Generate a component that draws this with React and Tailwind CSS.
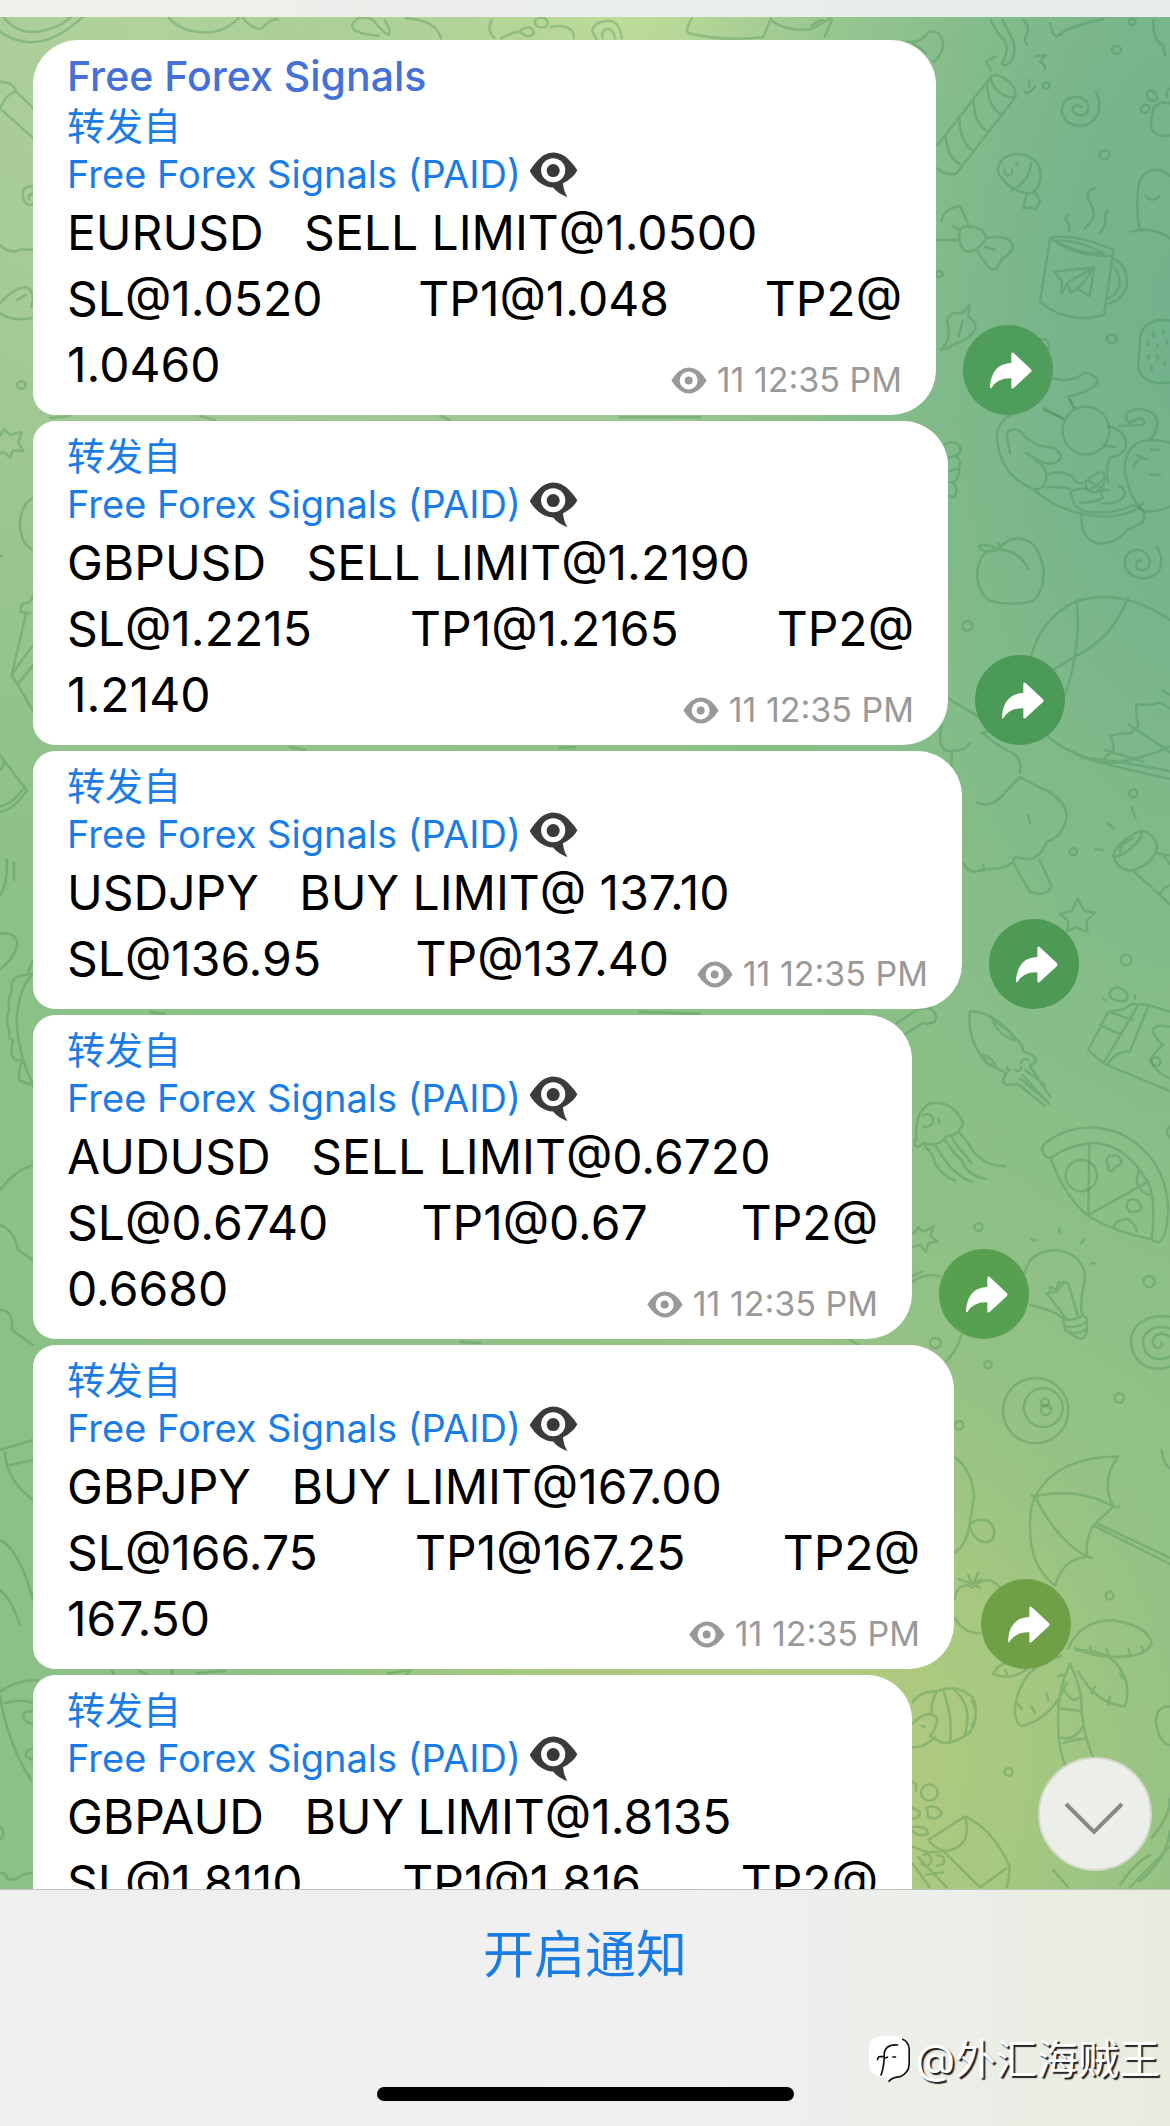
import React from "react";

const messages = [
  {
    id: 1,
    title: "Free Forex Signals",
    width: "w-[903px]",
    corners: "rounded-tl-[45px] rounded-bl-[22px]",
    share: "bg-[#4f9d5a]",
    lines: [["EURUSD   SELL LIMIT@1.0500"], ["SL@1.0520", "TP1@1.048", "TP2@"]],
    last: "1.0460",
  },
  {
    id: 2,
    width: "w-[915px]",
    corners: "rounded-l-[22px]",
    share: "bg-[#4b9a57]",
    lines: [["GBPUSD   SELL LIMIT@1.2190"], ["SL@1.2215", "TP1@1.2165", "TP2@"]],
    last: "1.2140",
  },
  {
    id: 3,
    width: "w-[929px]",
    corners: "rounded-l-[22px]",
    share: "bg-[#4c9a54]",
    lines: [["USDJPY   BUY LIMIT@ 137.10"]],
    last: "SL@136.95       TP@137.40",
  },
  {
    id: 4,
    width: "w-[879px]",
    corners: "rounded-l-[22px]",
    share: "bg-[#57a050]",
    lines: [["AUDUSD   SELL LIMIT@0.6720"], ["SL@0.6740", "TP1@0.67", "TP2@"]],
    last: "0.6680",
  },
  {
    id: 5,
    width: "w-[921px]",
    corners: "rounded-l-[22px]",
    share: "bg-[#6fa045]",
    lines: [["GBPJPY   BUY LIMIT@167.00"], ["SL@166.75", "TP1@167.25", "TP2@"]],
    last: "167.50",
  },
  {
    id: 6,
    width: "w-[879px]",
    corners: "rounded-l-[22px]",
    lines: [["GBPAUD   BUY LIMIT@1.8135"], ["SL@1.8110", "TP1@1.816", "TP2@"]],
  },
];

const SpeechEye = () => (
  <svg viewBox="86 58 150 147" className="h-[48px] w-[49px] shrink-0" aria-hidden="true">
    <path
      fill="#3b3b3d"
      d="M88 122Q98 104 116 86Q136 66 160 66Q186 66 208 88Q224 104 234 120Q222 144 190 160Q192 184 204 203Q172 190 160 173Q116 170 88 122Z"
    />
    <circle cx="160" cy="120" r="37" fill="#fff" />
    <circle cx="160" cy="121" r="20" fill="#39393b" />
  </svg>
);

const ViewsEye = () => (
  <svg viewBox="37 79 108 80" className="h-[27px] w-9" aria-hidden="true">
    <path fill="#999" d="M38 119Q62 80 91 80Q120 80 144 119Q120 158 91 158Q62 158 38 119Z" />
    <circle cx="90" cy="119" r="27" fill="#fff" />
    <circle cx="90" cy="119" r="12" fill="#999" />
  </svg>
);

const ShareArrow = () => (
  <svg viewBox="25 14 268 270" className="size-full" aria-hidden="true">
    <path
      fill="#fff"
      d="M169 100Q170 94 176 98L228 147Q231 151 228 155L176 203Q170 207 169 201V174Q128 172 109 203Q104 207 105 198Q110 130 169 128Z"
    />
  </svg>
);

const Wallpaper = () => (
  <svg
    viewBox="0 17 1170 1872"
    preserveAspectRatio="xMaxYMin slice"
    className="absolute inset-0 size-full"
    aria-hidden="true"
  >
    <defs>
      <radialGradient id="top" gradientUnits="userSpaceOnUse" cx="620" cy="0" r="520">
        <stop offset="0" stopColor="#bfdc99" />
        <stop offset="0.5" stopColor="#b0d399" stopOpacity="0.6" />
        <stop offset="1" stopColor="#a8cf98" stopOpacity="0" />
      </radialGradient>
      <radialGradient id="corner" gradientUnits="userSpaceOnUse" cx="150" cy="40" r="900">
        <stop offset="0" stopColor="#b2d29b" />
        <stop offset="0.4" stopColor="#a8cb98" stopOpacity="0.8" />
        <stop offset="1" stopColor="#a0c898" stopOpacity="0" />
      </radialGradient>
      <radialGradient
        id="teal"
        gradientUnits="userSpaceOnUse"
        cx="0"
        cy="0"
        r="1"
        gradientTransform="translate(1210 330) scale(560 1080)"
      >
        <stop offset="0" stopColor="#70b18c" />
        <stop offset="0.3" stopColor="#79b58b" />
        <stop offset="0.6" stopColor="#7fb98a" stopOpacity="0.6" />
        <stop offset="1" stopColor="#86bc88" stopOpacity="0" />
      </radialGradient>
      <radialGradient id="lime" gradientUnits="userSpaceOnUse" cx="760" cy="1760" r="760">
        <stop offset="0" stopColor="#bccc80" />
        <stop offset="0.35" stopColor="#a9c97f" stopOpacity="0.9" />
        <stop offset="0.6" stopColor="#98c384" stopOpacity="0.6" />
        <stop offset="1" stopColor="#90c086" stopOpacity="0" />
      </radialGradient>
    </defs>
    <rect y="17" width="1170" height="1872" fill="#8bc086" />
    <rect y="17" width="1170" height="1872" fill="url(#corner)" />
    <rect y="17" width="1170" height="1872" fill="url(#top)" />
    <rect y="17" width="1170" height="1872" fill="url(#teal)" />
    <rect y="17" width="1170" height="1872" fill="url(#lime)" />

    <g
      fill="none"
      stroke="#3d8650"
      strokeOpacity="0.3"
      strokeWidth="2.5"
      strokeLinecap="round"
      strokeLinejoin="round"
      className="[&_*]:[vector-effect:non-scaling-stroke]"
    >
      {/* top left */}
      <g transform="scale(.3827 .3333)">
        <path d="M0 95Q100 175 215 52M10 52Q60 130 165 70L185 52M440 52Q480 105 560 95Q600 85 625 52M635 55Q660 90 685 85Q700 60 725 58" />
        <path d="M990 108Q910 100 922 70Q940 40 975 60Q1000 95 1015 105Q1025 95 1005 60M1060 55Q1140 60 1152 115M1285 60Q1270 90 1292 115M1310 115Q1340 95 1360 95Q1380 120 1395 100Q1390 70 1360 90M1400 75Q1390 55 1420 52Q1440 65 1425 82Q1405 85 1400 75M1440 80Q1500 70 1500 115" />
        <path d="M0 245Q35 245 42 275L88 325M0 325L88 415M0 325Q20 275 42 275M88 560Q50 555 62 600Q70 620 88 612M88 580Q72 582 76 598M0 735Q25 765 55 748L88 750M0 910Q40 860 70 862Q95 880 82 920M0 940Q30 965 82 955M45 900L66 885" />
        <circle cx="56" cy="1155" r="11" />
      </g>
      {/* top right */}
      <g transform="translate(570 0) scale(.3827 .3333)">
        <path d="M70 118L58 95Q60 65 100 62Q130 62 135 115M85 115Q80 88 100 86Q115 90 118 115M318 55Q300 90 310 100Q400 125 505 112L525 55M525 60Q560 95 630 88L680 55M630 80Q650 60 660 60M665 110L685 60M880 125Q915 130 935 98Q965 85 975 125Q975 165 950 185M895 130Q920 145 930 160" />
        <path d="M1100 60Q1115 100 1135 120Q1150 150 1128 190Q1140 205 1155 180Q1170 140 1150 105L1130 60M1185 60Q1205 85 1190 110Q1185 125 1195 135M1220 168L1243 165L1228 185Q1245 195 1240 210M1088 185L1100 210M1095 180L1112 170M1188 275Q1200 285 1215 260M1200 240V260M1255 70L1258 90Q1265 110 1275 108Q1310 75 1395 58M1525 60Q1520 120 1550 135L1555 165" />
        <path d="M1100 230L960 435M1165 290L1010 520Q985 530 960 505M1100 230Q1115 218 1145 242Q1170 270 1163 290Q1150 300 1120 275Q1098 250 1100 230M1090 250Q1090 320 1128 345M1055 305Q1055 370 1092 395M1018 360Q1018 425 1055 455M982 410Q985 470 1018 492" />
        <path d="M1375 275Q1400 345 1350 375Q1295 385 1285 335Q1285 290 1330 290Q1365 305 1350 340Q1325 355 1312 330Q1318 308 1335 320" />
        <path d="M1120 500Q1130 460 1175 462Q1225 470 1230 520Q1230 570 1200 582Q1150 570 1125 530Q1115 515 1120 500M1135 510Q1135 530 1150 525M1155 570Q1200 545 1205 490M1165 495L1170 490M1192 585L1185 625L1205 622L1218 630L1228 605L1215 575M1155 510V520" />
        <path d="M970 665Q975 625 1020 618L1045 685M960 720L1015 720M1020 685Q1045 670 1075 690Q1090 705 1085 720Q1060 760 1035 755Q1010 735 1020 685M1085 715Q1150 700 1158 740Q1150 765 1130 775L1115 805Q1100 815 1090 795L1065 755M1000 680L1020 690M1085 740L1110 750" />
        <path d="M1255 712L1228 905Q1300 975 1395 945L1420 755M1255 712Q1320 700 1420 750M1255 712Q1310 770 1415 768M1270 722Q1330 720 1395 760Q1330 765 1270 722M1420 775Q1460 800 1455 860Q1440 905 1400 912M1418 800Q1440 820 1435 860Q1425 890 1405 895M1265 815L1370 802L1358 888L1325 865L1340 850L1370 802L1300 848L1285 880V842ZM1300 848L1308 880L1325 865" />
        <path d="M1370 565Q1345 575 1355 600Q1375 635 1365 660L1345 685M1300 645Q1290 660 1305 675V693M1405 630Q1395 650 1400 670L1385 700" />
        <path d="M970 1050Q1000 1010 985 970Q990 930 1025 940L1045 915L1040 950Q1065 965 1058 990Q1040 1020 1010 1030Q990 1045 970 1050M1025 965L1015 1010M1225 1020Q1255 1010 1250 1045" />
        <path d="M1465 695L1488 690Q1475 600 1490 540Q1505 505 1540 510Q1565 520 1580 540M1488 690Q1530 685 1568 715M1505 588Q1520 610 1540 590" />
        <path d="M1490 1010Q1500 960 1550 960L1600 965M1490 1010L1485 1100Q1490 1145 1540 1150L1600 1145M1525 1000V1010M1550 990V1000M1510 1025V1035M1535 1035V1045M1512 1065V1075M1535 1065V1078M1520 1100V1110M1555 1085V1095M1560 1020V1032" />
        <path d="M1525 325Q1540 300 1570 310M1525 325Q1515 360 1520 390Q1540 415 1570 405M1507 285Q1510 265 1525 275Q1540 290 1530 302Q1510 305 1507 285M1492 325Q1500 305 1515 320Q1515 340 1500 338Q1490 335 1492 325M1560 290Q1555 265 1575 265" />
        <circle cx="1428" cy="150" r="12" />
        <circle cx="1397" cy="464" r="13" />
        <circle cx="1416" cy="1017" r="13" />
        <circle cx="1469" cy="66" r="9" />
        <circle cx="1244" cy="257" r="9" />
        <circle cx="965" cy="822" r="9" />
        <path d="M1265 1135Q1310 1150 1345 1118Q1380 1125 1378 1150Q1360 1175 1300 1190L1318 1222M1240 1225L1290 1258" />
      </g>
      {/* astronaut, peach, globe, tree, torch */}
      <g transform="translate(780 400) scale(.3333 .3827)">
        <path d="M650 95Q655 55 690 40M650 95Q660 200 760 232Q840 300 980 305Q1060 300 1090 270M690 140L680 90Q690 70 720 80Q750 120 820 125Q850 140 840 155Q820 175 780 160L738 138M760 232Q790 240 800 205Q800 170 765 158M800 195Q840 180 875 200Q890 220 905 218M800 228Q850 225 875 235M870 250Q870 230 920 232M875 250Q880 285 920 292Q1000 300 1060 275M905 295Q900 370 960 375Q1010 375 1040 340L1090 320M1060 275L1090 290Q1100 310 1080 325" />
        <path d="M870 0L882 22M790 25L850 48" />
        <ellipse cx="918" cy="80" rx="70" ry="63" />
        <path d="M985 68L1000 72Q1040 85 1038 120Q1030 145 990 150Q975 180 985 215M1020 68L1090 65Q1100 50 1080 48L1050 60Q1035 55 1040 35Q1065 15 1110 30Q1140 45 1130 70Q1125 95 1105 105M975 120L1005 122M1035 190Q1030 125 1085 108Q1130 100 1170 112M1035 190Q1050 260 1090 290Q1130 295 1170 278M1060 175Q1070 155 1090 150M1070 145L1100 155M1115 130H1138M1112 195H1140M915 215Q950 185 970 190Q985 220 950 240Q920 245 915 215M925 210L970 235M930 235L975 205M900 268Q940 270 970 255Q950 230 985 235M965 270Q1020 275 1035 245Q1030 225 1015 225" />
        <path d="M660 392Q600 385 592 450Q590 500 630 525Q690 540 760 525Q800 490 788 430Q770 360 710 362Q680 365 660 385M660 392Q710 390 745 440M660 390Q620 375 595 382Q610 405 660 390M655 375L662 392" />
        <path d="M1130 383Q1155 415 1135 450Q1100 475 1060 460Q1025 440 1038 410Q1055 385 1090 395Q1115 410 1108 435Q1085 455 1068 435Q1070 415 1085 420" />
        <path d="M755 665Q785 570 890 525Q1030 490 1170 575M805 880Q870 930 990 950Q1100 935 1170 905M905 935Q1000 940 1170 970M930 940Q1060 970 1170 990M890 525Q905 650 855 770M1045 515Q1000 620 890 668Q850 690 820 705M1150 760L1170 770M1170 805L1140 790Q1110 800 1070 795Q1065 820 1075 850Q1050 880 1030 870L990 878Q1005 900 1000 915L975 935M1045 848L1170 920M975 915L1090 945" />
        <path d="M505 780L600 830M485 850Q470 910 505 918L540 915Q560 910 570 895M515 920V955M610 870Q630 890 680 915Q730 930 720 975M720 985Q680 1020 660 1040Q630 1065 590 1052M720 985Q770 1010 800 1020Q860 1050 860 1090Q850 1140 800 1155Q780 1200 740 1200L705 1195Q690 1230 610 1225Q570 1245 550 1210M700 1210L750 1285Q800 1300 815 1270L778 1200M745 1085L750 1105M610 1215L612 1230M605 870L625 865" />
        <path d="M1000 1190Q1005 1160 1080 1125L1100 1128Q1130 1145 1132 1170Q1120 1215 1050 1230Q1010 1225 1000 1190M1000 1190Q1020 1200 1060 1165Q1095 1140 1080 1125M1022 1190Q1010 1165 1060 1145M1060 1230L1170 1318M1132 1185L1170 1190M1140 1290Q1155 1270 1170 1268M1150 1190L1170 1212M982 1105L1003 1120M1055 1063L1067 1093M948 1174L970 1176" />
        <path d="M893 1302L912 1335L945 1340L920 1362L922 1390L890 1378L862 1388L865 1362L840 1343L875 1335Z" />
        <path d="M495 115Q520 105 540 120Q545 140 530 145Q545 165 538 180Q535 210 520 215Q540 240 520 255L508 250M508 150L530 145M508 185L535 180M508 215L520 215" />
        <ellipse cx="562" cy="590" rx="15" ry="12" />
        <ellipse cx="1060" cy="1028" rx="12" ry="10" />
        <ellipse cx="880" cy="1180" rx="11" ry="9" />
        <ellipse cx="1039" cy="1463" rx="16" ry="14" />
      </g>
      {/* squid, gift, jellyfish, pizza, bulb, spiral, ball */}
      <g transform="translate(780 980) scale(.3333)">
        <path d="M350 130L395 100Q420 80 450 85Q475 100 465 125Q445 135 430 128L375 162" />
        <path d="M570 95Q560 180 620 250L680 280Q660 305 680 315L715 312L795 378M570 95Q640 90 725 195L730 215Q770 225 768 245L750 258L810 350M638 122Q650 160 705 182Q690 150 638 122M610 225Q615 250 648 262Q640 235 610 225M735 270L795 315M728 285L808 372M720 295L790 355M682 262Q680 275 690 270M705 268Q715 280 725 262M745 240Q730 232 722 250" />
        <path d="M985 95L1030 88L1055 72L1105 75L1170 95M985 95L925 210L970 250L1170 333M970 250Q1030 150 1075 75M985 250Q1010 210 1050 215Q1075 150 1105 80M960 135L1025 165M985 95L1060 120M990 50Q985 25 1015 22Q1050 35 1040 60Q1015 70 990 50M1065 45V55M970 55L975 60M1170 140Q1120 130 1118 155Q1130 180 1150 195Q1120 220 1110 240Q1130 280 1170 295" />
        <circle cx="1128" cy="245" r="13" />
        <path d="M410 480Q400 400 450 370Q520 360 550 430Q540 455 520 465Q500 465 490 480Q470 500 430 490M430 490Q400 515 405 480M430 405Q455 395 460 420Q455 445 430 440M475 415L478 430M435 500Q460 520 465 550Q490 590 525 602M465 495Q480 520 495 540Q530 590 575 605M495 480Q520 520 545 540Q560 585 615 597M515 470Q530 500 560 530Q570 545 575 550M535 455Q560 480 580 515Q620 560 675 558" />
        <path d="M790 520Q780 500 800 485Q900 415 1020 460Q1160 530 1165 690Q1160 770 1140 785Q1120 790 1115 775Q1130 650 1100 600Q1040 500 950 488Q860 495 820 530Q800 540 790 520M812 535Q850 640 920 705Q1000 755 1115 778M928 490L925 705L1105 605M1080 570Q1060 600 1080 625Q1095 645 1115 645M1000 740Q1015 715 1045 718Q1070 735 1070 755" />
        <circle cx="904" cy="587" r="47" />
        <path d="M980 545Q980 525 1000 528Q1015 520 1025 545Q1020 560 1005 560Q1000 580 985 570L985 555ZM1040 680Q1040 660 1060 658Q1080 660 1085 685Q1075 700 1060 695Q1045 700 1040 680M1170 440Q1150 455 1170 472" />
        <path d="M735 880Q745 815 825 810Q915 820 915 900Q900 960 905 1000L920 1015L922 1050Q915 1080 895 1075L855 1050L850 1015Q820 990 750 975M855 1020Q890 1020 910 1005M858 1040Q895 1045 920 1025M868 1055Q900 1065 920 1045M858 1015L800 940L830 935L850 905L865 910L893 1005M810 940V920L830 930L835 905L850 915M838 745V757M755 778L765 783M912 778L903 790M935 850H945" />
        <path d="M1170 1010Q1080 1000 1055 1065Q1045 1130 1100 1160Q1140 1172 1170 1160M1170 1045Q1110 1030 1090 1075Q1085 1120 1120 1135Q1150 1140 1170 1130M1170 1070Q1140 1050 1120 1075Q1115 1100 1135 1105Q1150 1100 1145 1088" />
        <circle cx="767" cy="1292" r="98" />
        <circle cx="790" cy="1283" r="58" />
        <circle cx="795" cy="1268" r="12" />
        <circle cx="798" cy="1290" r="15" />
        <circle cx="595" cy="742" r="12" />
        <circle cx="1107" cy="905" r="17" />
        <circle cx="466" cy="1089" r="16" />
        <circle cx="624" cy="1154" r="11" />
        <circle cx="1018" cy="1254" r="14" />
        <circle cx="537" cy="1336" r="13" />
        <path d="M400 760L415 742L430 755L460 740L452 768L472 785L445 790L438 815L420 795L400 800M398 905Q440 875 480 890M398 888L425 875M545 1065Q530 1115 497 1145" />
      </g>
      {/* umbrella, palm, pumpkin, popcorn */}
      <g transform="translate(780 1450) scale(.3333 .431)">
        <path d="M523 15Q580 50 582 110L568 175Q560 220 525 238M568 175Q590 155 625 165Q655 185 635 210Q590 225 568 175" />
        <path d="M765 108Q830 15 1015 15Q960 70 1000 132L940 175Q915 210 922 248Q850 250 825 315Q750 270 750 180Q750 130 765 108M765 108Q900 85 1000 132M765 108Q830 210 922 248M1000 132H1018M940 175L1170 265M955 172L1170 250M922 248L935 250M755 105L770 112M1145 0Q1150 35 1170 42" />
        <path d="M865 460Q900 395 1000 395Q1110 410 1115 450Q1100 470 1070 475Q970 490 885 460M935 470L930 455M985 478L980 460M1050 475L1045 460M1090 470L1085 455M890 465Q1010 460 1040 540Q1045 580 1035 595Q950 590 895 515M935 565L945 550M985 590L990 572M1020 520L1030 530M845 478Q720 500 705 600Q705 640 730 640Q820 620 860 540M765 610L755 595M805 580L800 565M715 590L725 600M870 495Q830 560 835 640Q835 690 855 730M870 495Q910 560 905 610Q915 670 940 715M855 560Q880 590 895 575M845 600L900 605M838 665Q880 680 910 640M850 680Q890 670 922 670M860 520L835 525M640 520Q655 495 680 495M640 520Q700 535 740 508M680 520L675 510" />
        <path d="M575 320Q630 280 670 330M525 345Q530 310 570 315M525 390Q550 425 600 425M535 300L575 310L605 300M575 310L565 290M580 310L595 285M575 310L600 320" />
        <path d="M398 585Q420 560 470 560Q530 540 580 575Q600 620 570 655Q530 680 490 680L450 665M398 690Q440 690 465 665M398 635Q440 600 470 620Q475 640 450 665M470 560Q450 590 455 615M490 558Q520 620 510 680M520 555Q580 590 555 660M575 580Q600 610 575 640M425 640L435 642" />
        <ellipse cx="448" cy="795" rx="25" ry="19" />
        <ellipse cx="686" cy="747" rx="12" ry="9" />
        <ellipse cx="989" cy="338" rx="12" ry="9" />
        <path d="M440 830Q460 820 485 840Q480 860 445 852ZM398 770Q412 775 408 790M398 830L420 840Q420 855 398 855M398 875Q440 870 445 890Q420 900 398 885M445 905L555 850Q640 880 688 965Q690 990 680 1015M555 850Q580 920 500 930Q470 930 445 905M398 920Q450 940 490 930L600 1015L680 970M398 960L450 1015M415 945L500 1015M430 940Q450 930 455 955Q440 970 425 960M470 940Q500 940 490 960L470 965M440 985L490 980M820 975L865 1015M1110 940Q1060 960 1020 1010M1115 900Q1170 850 1170 810M1170 885Q1160 950 1080 1000M1170 920L1050 1015M1170 595Q1120 595 1130 640Q1140 680 1170 685" />
      </g>
      {/* left edge */}
      <g transform="translate(0 400) scale(.3333 .4464)">
        <path d="M0 80L12 65L30 78L65 72L55 95L70 115L40 112L30 130L15 118L0 118M98 220Q60 235 60 285Q65 325 98 335M98 440Q90 455 80 455Q60 455 62 475L90 478M78 480L35 615L98 695M35 615L98 550M55 635L98 595M0 350H5M0 795L80 875Q40 920 0 922M75 865Q40 905 0 910M0 830Q20 810 5 800M20 1030Q25 1080 0 1110M42 1035V1075M0 1195Q50 1190 52 1220Q40 1255 0 1275M98 1285Q55 1320 50 1390Q55 1470 98 1530M98 1285L60 1290Q30 1295 35 1325Q20 1345 28 1365Q15 1390 28 1415Q25 1435 40 1435Q25 1470 50 1480L70 1475Q50 1510 60 1525L98 1535M98 1258L85 1280" />
      </g>
      <g transform="translate(0 1660) scale(.4464 .3333)">
        <path d="M0 95Q35 60 85 60M10 130Q40 115 78 130M0 110Q20 260 70 360M75 155Q45 150 55 180Q70 195 75 190M75 265Q55 270 58 290L75 300M0 500Q15 520 0 540M0 640Q15 635 15 655Q35 665 50 645L78 635M250 30L255 45M310 30L330 45M385 30V45M440 40L505 32M870 40L920 30L910 45" />
      </g>
      <path d="M0 1190Q15 1170 33 1165M0 1225Q14 1230 18 1250L33 1260M0 1310Q14 1310 12 1330L33 1345M0 1450L33 1440M5 1452Q6 1480 33 1500M10 1465L33 1460M0 1540Q20 1550 33 1600M0 1590Q12 1600 20 1625" />
      <path d="M50 418L70 416M200 416L215 420M440 416L450 420M620 417H700M290 747L305 750M560 748L575 747M150 1012L165 1014M640 1012L700 1014M460 1342L480 1343M850 1340L858 1345" />
    </g>
  </svg>
);

const Message = ({ message }) => (
  <li className="flex items-end gap-[27px]">
    <article
      className={`${message.width} ${message.corners} max-w-full shrink-0 rounded-r-[45px] bg-white px-[34px] pt-[11px] pb-[17px]`}
    >
      {message.title && (
        <h2 className="text-[41px] leading-[51px] font-medium text-[#4570d8]">{message.title}</h2>
      )}

      <a href="#forwarded" className="mb-[2px] block text-[38px] leading-[48px] text-[#1a7ce6]">
        <span className="block">转发自</span>
        <span className="flex items-center gap-2">
          Free Forex Signals (PAID)
          <SpeechEye />
        </span>
      </a>

      {message.lines.map((parts) => (
        <p key={parts[0]} className="flex justify-between text-[48px] leading-[66px] whitespace-pre">
          {parts.map((part) => (
            <span key={part}>{part}</span>
          ))}
        </p>
      ))}

      {message.last && (
        <div className="flex items-end justify-between">
          <p className="text-[48px] leading-[66px] whitespace-pre">{message.last}</p>
          <p className="flex items-center gap-[10px] text-[34px] leading-[36px] text-[#999]">
            <ViewsEye />
            <span>11 12:35 PM</span>
          </p>
        </div>
      )}
    </article>

    {message.share && (
      <button
        type="button"
        aria-label="Share"
        className={`${message.share} size-[90px] shrink-0 rounded-full`}
      >
        <ShareArrow />
      </button>
    )}
  </li>
);

const App = () => {
  return (
    <div className="flex h-screen flex-col overflow-hidden bg-[#eff0f0] font-['Inter','Noto_Sans_CJK_SC',sans-serif] text-black">
      {/* HEADER EDGE */}
      <header className="h-[17px] shrink-0 bg-linear-to-r from-[#eff0ec] to-[#e7edea]" />

      {/* CHAT */}
      <main className="relative min-h-0 flex-1 overflow-hidden">
        <Wallpaper />

        <ul className="relative flex flex-col gap-[6px] pt-[23px] pl-[33px]">
          {messages.map((message) => (
            <Message key={message.id} message={message} />
          ))}
        </ul>

        <button
          type="button"
          aria-label="Scroll to bottom"
          className="absolute right-[18px] bottom-[18px] size-[114px] rounded-full border-2 border-[#d3d9cd] bg-[#eceee8]"
        >
          <svg viewBox="0 0 110 110" className="size-full" fill="none" stroke="#888" strokeWidth="4" aria-hidden="true">
            <path d="M26 45L54 73L82 45" />
          </svg>
        </button>
      </main>

      {/* FOOTER */}
      <footer className="relative flex shrink-0 flex-col items-center gap-[102px] border-t border-[#bfc1bf] bg-linear-to-r from-[#eeefef] via-[#f0f0f1] via-60% to-[#e8ecdf] pt-[35px] pb-[25px]">
        <button type="button" className="text-[51px] leading-[60px] text-[#1a7ce6]">
          开启通知
        </button>
        <div className="h-[14px] w-[417px] rounded-full bg-black" />

        <p className="absolute right-[10px] bottom-[42px] flex items-center gap-1 text-[41px] leading-[50px] text-white [text-shadow:2px_2px_1px_#222]">
          <svg viewBox="38 58 128 144" className="h-[48px] w-[43px]" aria-hidden="true">
            <path
              fill="#fff"
              d="M76 62H124Q158 64 161 98V144Q160 172 134 181Q116 184 100 198L94 184H76Q42 178 40 144V98Q42 66 76 62Z"
            />
            <path
              fill="none"
              stroke="#111"
              strokeWidth="5"
              d="M140 70Q160 78 161 100V146Q160 172 134 183Q112 184 99 198M66 134Q66 123 74 123H86Q84 84 128 88M76 180Q84 160 86 128L98 124M110 124H122"
            />
          </svg>
          @外汇海贼王
        </p>
      </footer>
    </div>
  );
};

export default App;
